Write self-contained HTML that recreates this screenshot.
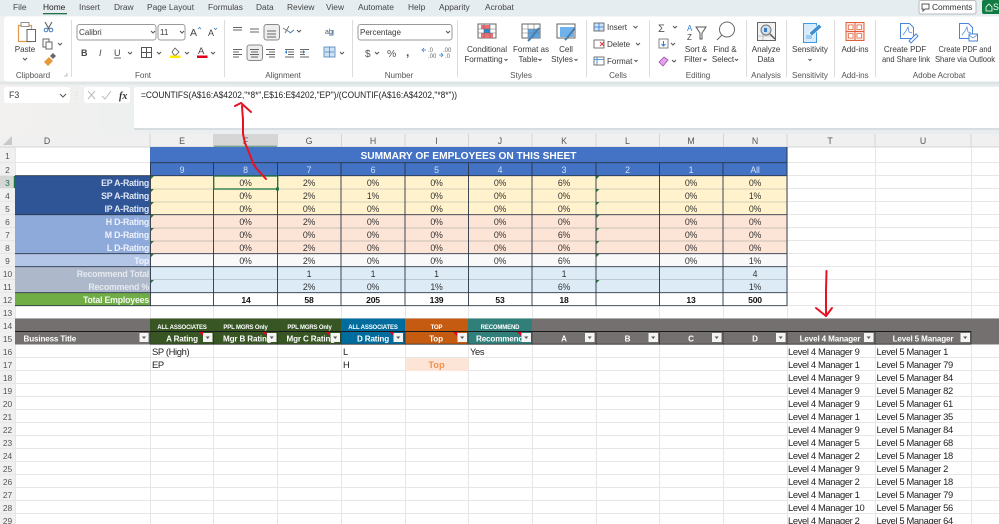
<!DOCTYPE html>
<html><head><meta charset="utf-8"><title>Sheet</title>
<style>
html,body{margin:0;padding:0;background:#fff;width:999px;height:524px;overflow:hidden}
svg{display:block;font-family:"Liberation Sans",sans-serif}
.t{font-size:8.1px;fill:#3a3a3a;letter-spacing:-.05px}
.m{text-anchor:middle}
.tab{font-size:8.4px;fill:#444}
.c{font-size:8.8px;fill:#333;text-anchor:middle;letter-spacing:-.2px}
.b{font-weight:bold;fill:#111;font-size:8.6px}
.h{font-size:8.8px;fill:#555;text-anchor:middle}
.r{font-weight:bold;font-size:8.8px;text-anchor:end;letter-spacing:-.22px}
.w{font-weight:bold;fill:#fff;font-size:8.1px;letter-spacing:-.15px}
.wm{text-anchor:middle}
.s{font-weight:bold;fill:#fff;font-size:6px;text-anchor:middle;letter-spacing:-.15px}
.d{font-size:9.4px;fill:#222;letter-spacing:-.36px}
.i{fill:none;stroke:#555;stroke-width:1}
.n{fill:#fff;stroke:#888;stroke-width:.7}
</style></head><body>
<svg width="999" height="524" viewBox="0 0 999 524" xmlns="http://www.w3.org/2000/svg">
<defs><linearGradient id="bg" x1="0" x2="1" y1="0" y2="0"><stop offset="0" stop-color="#f3f1ef"/><stop offset=".25" stop-color="#e8eef0"/></linearGradient></defs>
<rect width="999" height="134" fill="url(#bg)"/>
<rect width="999" height="16" fill="#e6edf0"/>
<!-- tabs -->
<g class="tab">
<text x="13" y="10">File</text><text x="43" y="10" style="fill:#222">Home</text><text x="79" y="10">Insert</text><text x="114" y="10">Draw</text><text x="147" y="10">Page Layout</text><text x="208" y="10">Formulas</text><text x="256" y="10">Data</text><text x="287" y="10">Review</text><text x="326" y="10">View</text><text x="358" y="10">Automate</text><text x="408" y="10">Help</text><text x="439" y="10">Apparity</text><text x="485" y="10">Acrobat</text>
</g>
<rect x="43" y="13" width="24" height="1.3" fill="#217346"/>
<rect x="919" y=".5" width="57" height="13.5" rx="2" fill="#fff" stroke="#bbb"/>
<path d="M922 4h7v5h-4l-2 2v-2h-1z" class="i" stroke-width=".8"/>
<text x="932" y="10" class="tab" style="fill:#333">Comments</text>
<rect x="982" y="0" width="20" height="14" rx="2" fill="#107c41"/>
<path d="M986 7l3-3 3 3v4h-6z" fill="none" stroke="#fff" stroke-width=".8"/>
<text x="993" y="10" font-size="8.8" fill="#fff">S</text>
<!-- ribbon card -->
<rect x="4" y="16.5" width="1000" height="65" rx="3" fill="#fff"/>
<rect x="0" y="81.5" width="999" height="3" fill="#d9dfe1" opacity=".7"/>
<g stroke="#dcdcdc" stroke-width="1"><path d="M71.500 20V77M224.500 20V77M352.500 20V77M457.500 20V77M586.500 20V77M649.500 20V77M746.500 20V77M786.500 20V77M834.500 20V77M875.500 20V77"/></g>
<!-- group labels -->
<g class="t m" style="fill:#555">
<text x="33" y="78">Clipboard</text><text x="143" y="78">Font</text><text x="283" y="78">Alignment</text><text x="399" y="78">Number</text><text x="521" y="78">Styles</text><text x="618" y="78">Cells</text><text x="698" y="78">Editing</text><text x="766" y="78">Analysis</text><text x="810" y="78">Sensitivity</text><text x="855" y="78">Add-ins</text><text x="939" y="78">Adobe Acrobat</text>
</g>
<!-- clipboard -->
<path d="M18.500 25.500h13v16h-13z" fill="#fff" stroke="#e39a4c" stroke-width="1.200"/>
<rect x="21" y="22.500" width="8" height="4" fill="#fff" stroke="#777" stroke-width=".8"/>
<rect x="27" y="29.500" width="8.500" height="12" fill="#fff" stroke="#666" stroke-width="1"/>
<text x="25" y="52" class="t m">Paste</text>
<path d="M23 58l2 2 2-2" class="i" stroke-width=".8"/>
<path d="M45 22l4 7M52 22l-4 7" stroke="#555" fill="none"/><circle cx="46" cy="30" r="1.800" fill="none" stroke="#3b7bbf"/><circle cx="51" cy="30" r="1.800" fill="none" stroke="#3b7bbf"/>
<rect x="43" y="39" width="6" height="8" fill="#fff" stroke="#666"/><rect x="46" y="42" width="6" height="7" fill="#fff" stroke="#666"/><path d="M58 43l2 2 2-2" class="i" stroke-width=".8"/>
<path d="M44 62l5-5 4 4-5 5z" fill="#e8973c"/><path d="M50 56l3-3 3 3-3 3z" fill="#666"/>
<path d="M64 76h3v-3" stroke="#aaa" fill="none" stroke-width=".8"/>
<!-- font -->
<rect x="77" y="24.500" width="79" height="15.500" rx="2.500" fill="#fff" stroke="#999"/>
<text x="79" y="35" class="t">Calibri</text><path d="M151 31l2 2 2-2" class="i" stroke-width=".8"/>
<rect x="158" y="24.500" width="27" height="15.500" rx="2.500" fill="#fff" stroke="#999"/>
<text x="160" y="35" class="t">11</text><path d="M180 31l2 2 2-2" class="i" stroke-width=".8"/>
<text x="190" y="36" font-size="10.500" fill="#444">A</text><path d="M198 29l1.500-1.500 1.500 1.500" stroke="#3b7bbf" fill="none" stroke-width=".8"/>
<text x="208" y="36" font-size="9" fill="#444">A</text><path d="M214 28l1.500 1.500 1.500-1.500" stroke="#3b7bbf" fill="none" stroke-width=".8"/>
<text x="81" y="56" font-size="9" font-weight="bold" fill="#444">B</text>
<text x="99" y="56" font-size="9" font-style="italic" fill="#444">I</text>
<text x="114" y="56" font-size="9" fill="#444">U</text><path d="M114 58h7" stroke="#444" stroke-width=".8"/><path d="M128 52l2 2 2-2" class="i" stroke-width=".8"/>
<path d="M141.500 47.500h10v10h-10zM146.500 47.500v10M141.500 52.500h10" class="i" stroke-width=".8"/><path d="M157 52l2 2 2-2" class="i" stroke-width=".8"/>
<path d="M172 52l3-4 4 4-3 3h-2z" fill="none" stroke="#555" stroke-width=".8"/><rect x="170" y="55.500" width="10.500" height="2.500" fill="#ffeb00"/><path d="M185 52l2 2 2-2" class="i" stroke-width=".8"/>
<text x="198" y="54" font-size="9.500" fill="#444">A</text><rect x="197" y="55.500" width="10.500" height="2.500" fill="#e3001b"/><path d="M211 52l2 2 2-2" class="i" stroke-width=".8"/>
<!-- alignment -->
<rect x="264" y="24.500" width="15.500" height="15.500" rx="2.500" fill="#eee" stroke="#888"/>
<rect x="247" y="45" width="15.500" height="15.500" rx="2.500" fill="#eee" stroke="#888"/>
<g stroke="#666" stroke-width=".9" fill="none">
<path d="M233 27.500h9M233 30h9M233 32.500h0M250 29h9M250 32h9M267 31h9M267 34h9M267 37h9"/>
<path d="M233 49.500h9M233 52h6M233 54.500h9M233 57h6M250 49.500h9M251 52h7M250 54.500h9M251 57h7M266 49.500h9M269 52h6M266 54.500h9M269 57h6"/>
<path d="M285 49.500h9M288 52h6M288 54.500h6M285 57h9M300 49.500h9M300 52h5M300 54.500h5M300 57h9"/>
</g>
<path d="M283 28l8 5M285 33l4-7" stroke="#777" fill="none"/><path d="M290 33l4-3" stroke="#3b7bbf" fill="none"/><path d="M297 30l2 2 2-2" class="i" stroke-width=".8"/>
<path d="M285 52l2-2v4zM305 52l-2-2v4z" fill="#2b7cd3"/>
<text x="325" y="34" font-size="7" fill="#555">ab</text><path d="M333 30v5h-4" stroke="#3b7bbf" fill="none"/>
<rect x="324" y="47" width="11" height="10" fill="#cfe3f6" stroke="#4a7fb5" stroke-width=".8"/><path d="M325 52h9M329.500 47v10" stroke="#4a7fb5" stroke-width=".7"/><path d="M340 52l2 2 2-2" class="i" stroke-width=".8"/>
<!-- number -->
<rect x="358" y="24.500" width="94" height="15.500" rx="2.500" fill="#fff" stroke="#999"/>
<text x="360" y="35" class="t">Percentage</text><path d="M446 31l2 2 2-2" class="i" stroke-width=".8"/>
<text x="365" y="57" font-size="10" fill="#555">$</text><path d="M375 52l2 2 2-2" class="i" stroke-width=".8"/>
<text x="387" y="57" font-size="10.500" fill="#555">%</text>
<text x="406" y="56" font-size="12" font-weight="bold" fill="#555">,</text>
<text x="428" y="52" font-size="6" fill="#666">.0</text><text x="428" y="58" font-size="6" fill="#666">.00</text><path d="M423 50h3M424 48l-2 2 2 2" stroke="#3b7bbf" fill="none" stroke-width=".8"/>
<text x="443" y="52" font-size="6" fill="#666">.00</text><text x="445" y="58" font-size="6" fill="#666">.0</text><path d="M439 55h3M441 53l2 2-2 2" stroke="#3b7bbf" fill="none" stroke-width=".8"/>
<!-- styles -->
<rect x="478" y="24" width="18" height="14" fill="#fff" stroke="#666"/><rect x="481" y="25" width="9" height="4" fill="#ef6e76"/><rect x="484" y="29" width="6" height="4" fill="#2b8ad6"/><rect x="481" y="33" width="12" height="5" fill="#ef6e76"/>
<path d="M478 29h18M478 33h18M484 24v14M490 24v14" stroke="#666" stroke-width=".6"/>
<rect x="522" y="24" width="18" height="14" fill="#fff" stroke="#666"/><rect x="528" y="29" width="12" height="9" fill="#5aa4e6"/><path d="M522 29h18M522 33h18M528 24v14M534 24v14" stroke="#777" stroke-width=".6"/><path d="M539 28l-9 11-2 2" stroke="#4b7ea8" stroke-width="2" fill="none"/>
<rect x="557" y="24" width="18" height="14" fill="#fff" stroke="#666"/><rect x="560" y="27" width="14" height="10" fill="#6fb1ea"/><path d="M575 28l-8 10-2 2" stroke="#4b7ea8" stroke-width="2" fill="none"/>
<g class="t m">
<text x="487" y="52">Conditional</text><text x="483.500" y="62">Formatting</text>
<text x="531" y="52">Format as</text><text x="528" y="62">Table</text>
<text x="566" y="52">Cell</text><text x="562" y="62">Styles</text>
</g>
<path d="M504.500 59l1.500 1.500 1.500-1.500M538.500 59l1.500 1.500 1.500-1.500M574.500 59l1.500 1.500 1.500-1.500M703.500 59l1.500 1.500 1.500-1.500M735 59l1.500 1.500 1.500-1.500M634.500 60l1.500 1.500 1.500-1.500M808.500 59l1.500 1.500 1.500-1.500" class="i" stroke-width=".8"/>
<!-- cells -->
<rect x="594" y="23" width="10" height="8" fill="#cfe3f6" stroke="#555" stroke-width=".8"/><path d="M594 27h10M599 23v8" stroke="#2b7cd3" stroke-width=".8"/>
<rect x="594" y="40" width="10" height="8" fill="#fff" stroke="#555" stroke-width=".8"/><path d="M600 42l4 4M604 42l-4 4" stroke="#d33" stroke-width=".9"/>
<rect x="594" y="57" width="10" height="8" fill="#fff" stroke="#555" stroke-width=".8"/><path d="M594 59.500h10M597 57v8" stroke="#2b7cd3" stroke-width=".8"/>
<g class="t"><text x="607" y="30">Insert</text><text x="607" y="47">Delete</text><text x="607" y="64">Format</text></g>
<path d="M633.500 26l2 2 2-2M636 43l2 2 2-2" class="i" stroke-width=".8"/>
<!-- editing -->
<text x="658" y="32" font-size="11" fill="#555">Σ</text><path d="M673 26l2 2 2-2" class="i" stroke-width=".8"/>
<rect x="659" y="39" width="9" height="9" fill="#fff" stroke="#666" stroke-width=".8"/><path d="M663.500 41v5M661.500 44l2 2 2-2" stroke="#2b7cd3" fill="none"/><path d="M671 43l2 2 2-2" class="i" stroke-width=".8"/>
<path d="M659 62l5-5 4 3-5 6z" fill="#e5a3ee" stroke="#a04ab0" stroke-width=".8"/><path d="M672 60l2 2 2-2" class="i" stroke-width=".8"/>
<text x="687" y="31" font-size="8" fill="#2b7cd3">A</text><text x="687" y="40" font-size="8" fill="#444">Z</text><path d="M696 27h10l-4 6v6h-2v-6z" class="i" stroke-width=".9"/>
<circle cx="727" cy="29.500" r="7.500" fill="#fff" stroke="#666"/><path d="M722 35l-5 5" stroke="#666"/>
<g class="t m"><text x="696" y="52">Sort &amp;</text><text x="693" y="62">Filter</text><text x="725" y="52">Find &amp;</text><text x="723" y="62">Select</text>
<text x="766" y="52">Analyze</text><text x="766" y="62">Data</text><text x="810" y="52">Sensitivity</text><text x="855" y="52">Add-ins</text>
<text x="905" y="52">Create PDF</text><text x="906" y="62" textLength="48" lengthAdjust="spacingAndGlyphs">and Share link</text><text x="965" y="52" textLength="53" lengthAdjust="spacingAndGlyphs">Create PDF and</text><text x="965" y="62" textLength="60" lengthAdjust="spacingAndGlyphs">Share via Outlook</text></g>
<!-- analyze -->
<rect x="757.500" y="22.500" width="18" height="18" fill="#f2f2f2" stroke="#666"/><circle cx="766" cy="30" r="5" fill="#cfe0ef" stroke="#777"/><rect x="764" y="28" width="3" height="4" fill="#3b7bbf"/><path d="M770 34l5 5" stroke="#555" stroke-width="1.400"/><path d="M758 36h13M763 34v6" stroke="#999" stroke-width=".6"/>
<!-- sensitivity -->
<path d="M803.500 23.500h13v19h-13z" fill="#d7ebfb" stroke="#3f9be0"/><path d="M809 33l10-9 3 3-10 9z" fill="#3f8ed0" stroke="#fff" stroke-width=".7"/><path d="M806 36h6M806 38h6" stroke="#3f9be0" stroke-width=".7"/>
<!-- add-ins -->
<rect x="846" y="22.500" width="18" height="18" fill="#fbe3da" stroke="#e0603c"/><path d="M855 22.500v18M846 31.500h18" stroke="#e0603c" stroke-width="1"/><rect x="848.500" y="25" width="4.500" height="4.500" fill="#fff" stroke="#e0603c" stroke-width=".7"/><rect x="857" y="25" width="4.500" height="4.500" fill="#fff" stroke="#e0603c" stroke-width=".7"/><rect x="848.500" y="33.500" width="4.500" height="4.500" fill="#fff" stroke="#e0603c" stroke-width=".7"/><rect x="857" y="33.500" width="4.500" height="4.500" fill="#fff" stroke="#e0603c" stroke-width=".7"/>
<!-- pdf -->
<path d="M900.500 23.500h9l4 4v11h-13z" fill="#fff" stroke="#4a86d8"/><path d="M903 35l3-4 2-4 1 5 3 1" fill="none" stroke="#4a86d8" stroke-width=".7"/><path d="M909 41l7-7 2 2-7 7z" fill="#fff" stroke="#4a86d8"/>
<path d="M959.500 23.500h9l4 4v11h-13z" fill="#fff" stroke="#4a86d8"/><path d="M962 35l3-4 2-4 1 5 3 1" fill="none" stroke="#4a86d8" stroke-width=".7"/><rect x="969" y="34" width="8.500" height="7" fill="#fff" stroke="#4a86d8"/><path d="M969 35l4 3 4-3" fill="none" stroke="#4a86d8" stroke-width=".7"/>
<!-- formula bar -->
<rect x="4" y="87" width="66" height="16" rx="2.500" fill="#fff"/>
<text x="9" y="98" class="t" style="font-size:8.800px">F3</text><path d="M60 94l3 3 3-3" class="i" stroke-width=".9"/>
<path d="M76.500 92v.1M76.500 95v.1M76.500 98v.1" stroke="#555" stroke-width="1.200"/>
<rect x="84" y="87" width="46" height="16" rx="2.500" fill="#fff"/>
<path d="M88 91l7 8M95 91l-7 8M102 96l3 3 6-8" fill="none" stroke="#bbb"/>
<text x="119" y="99" font-size="10" font-style="italic" font-family="Liberation Serif" fill="#333" font-weight="bold">fx</text>
<rect x="134" y="87" width="870" height="41.500" rx="2.500" fill="#fff"/>
<rect x="134" y="128" width="865" height="2" fill="#d8dde0"/>
<text x="141" y="98" font-size="8.800" fill="#222" textLength="316" lengthAdjust="spacingAndGlyphs">=COUNTIFS(A$16:A$4202,"*8*",E$16:E$4202,"EP")/(COUNTIF(A$16:A$4202,"*8*"))</text>

<!-- SHEET -->
<rect x="0" y="134" width="999" height="390" fill="#fff"/>
<rect x="0" y="134" width="999" height="13" fill="#f0f0f0"/>
<rect x="0" y="147" width="15" height="377" fill="#f0f0f0"/>
<path d="M12 136v9h-9z" fill="#c8c8c8"/>
<rect x="213.500" y="134" width="64" height="13" fill="#d6d6d6"/><rect x="213.500" y="145.800" width="64" height="1.400" fill="#217346"/>
<rect x="0" y="175.700" width="15" height="13" fill="#d6d6d6"/><rect x="13.800" y="175.700" width="1.400" height="13" fill="#217346"/>
<g stroke="#d4d4d4" stroke-width="1"><path d="M150 134V147M213.500 134V147M277.500 134V147M341.500 134V147M405 134V147M468.500 134V147M532 134V147M596 134V147M659.500 134V147M723.500 134V147M787 134V147M875 134V147M971 134V147M0 147H999"/></g>
<!-- grid -->
<g stroke="#e6e6e6" stroke-width="1">
<path d="M0 162.500H999M0 175.500H999M0 188.500H999M0 201.500H999M0 214.500H999M0 227.500H999M0 240.500H999M0 253.500H999M0 266.500H999M0 279.500H999M0 292.500H999M0 305.500H999M0 318.500H999M0 357.500H999M0 370.500H999M0 383.500H999M0 396.500H999M0 409.500H999M0 422.500H999M0 435.500H999M0 448.500H999M0 461.500H999M0 474.500H999M0 487.500H999M0 500.500H999M0 513.500H999"/>
<path d="M150.500 147V524M213.500 305V524M277.500 305V524M341.500 305V524M405.500 305V524M468.500 305V524M532.500 305V524M596.500 305V524M659.500 305V524M723.500 305V524M787.500 147V524M875.500 147V524M971.500 147V524M15.500 147V524"/>
</g>
<!-- summary fills -->
<rect x="150" y="147" width="637" height="15.700" fill="#4472c4"/>
<rect x="150" y="162.700" width="637" height="13" fill="#4472c4"/>
<rect x="150" y="175.700" width="637" height="39" fill="#fff2cc"/>
<rect x="150" y="214.700" width="637" height="39" fill="#fce4d6"/>
<rect x="150" y="253.700" width="637" height="13" fill="#f9f9f9"/>
<rect x="150" y="266.700" width="637" height="26" fill="#ddebf7"/>
<rect x="150" y="292.700" width="637" height="13" fill="#fff"/>
<rect x="15" y="175.700" width="135" height="39" fill="#2f5597"/>
<rect x="15" y="214.700" width="135" height="39" fill="#8eaadb"/>
<rect x="15" y="253.700" width="135" height="13" fill="#b4c6e7"/>
<rect x="15" y="266.700" width="135" height="26" fill="#adb9ca"/>
<rect x="15" y="292.700" width="135" height="13" fill="#70ad47"/>
<!-- thin inner rows -->
<g stroke="#c7c2b0" stroke-width=".7"><path d="M150 189H787M150 202H787"/></g>
<g stroke="#bdb3ac" stroke-width=".7"><path d="M150 228H787M150 241H787"/></g>
<path d="M150 279.700H787" stroke="#a9b4bd" stroke-width=".7"/>
<!-- dark lines -->
<g stroke="#2a3646" stroke-width=".9"><path d="M15 175.700H787M15 214.700H787M15 253.700H787M15 266.700H787M15 292.700H787M15 305.700H787"/>
<path d="M150.500 162.700V305.700M213.500 162.700V305.700M277.500 162.700V305.700M341 162.700V305.700M405 162.700V305.700M468.500 162.700V305.700M532 162.700V305.700M596 162.700V305.700M659.500 162.700V305.700M723 162.700V305.700M787 147V305.700M150 162.700H787"/></g>
<!-- green triangles -->
<g fill="#1e7b34">
<path d="M151 176v3l3-3zM151 189v3l3-3zM151 202v3l3-3zM151 215v3l3-3zM151 228v3l3-3zM151 241v3l3-3zM151 254v3l3-3zM151 280v3l3-3z"/>
<path d="M596.500 176v3l3-3zM596.500 189v3l3-3zM596.500 202v3l3-3zM596.500 215v3l3-3zM596.500 228v3l3-3zM596.500 241v3l3-3zM596.500 254v3l3-3zM596.500 280v3l3-3z"/>
</g>
<!-- selection -->
<rect x="213.700" y="176" width="64" height="13" fill="none" stroke="#217346" stroke-width="1.300"/>
<rect x="276" y="187.500" width="3" height="3" fill="#217346"/>
<!-- title -->
<text x="360.500" y="159" font-size="10.200" font-weight="bold" fill="#fff" textLength="216" lengthAdjust="spacingAndGlyphs">SUMMARY OF EMPLOYEES ON THIS SHEET</text>
<g class="c" style="fill:#cfe0f7"><text x="182" y="173">9</text><text x="245.500" y="173">8</text><text x="309" y="173">7</text><text x="373" y="173">6</text><text x="436.500" y="173">5</text><text x="500" y="173">4</text><text x="564" y="173">3</text><text x="627.500" y="173">2</text><text x="691" y="173">1</text><text x="755" y="173">All</text></g>
<!-- labels -->
<g class="r">
<text x="149" y="186" fill="#dfe7f5">EP A-Rating</text><text x="149" y="199" fill="#dfe7f5">SP A-Rating</text><text x="149" y="212" fill="#dfe7f5">IP A-Rating</text>
<text x="149" y="225" fill="#eef2fa">H D-Rating</text><text x="149" y="238" fill="#eef2fa">M D-Rating</text><text x="149" y="251" fill="#eef2fa">L D-Rating</text>
<text x="149" y="264" fill="#eef2fa">Top</text><text x="149" y="277" fill="#e6e9ef">Recommend Total</text><text x="149" y="290" fill="#e6e9ef">Recommend %</text><text x="149" y="303" fill="#f2f7ee">Total Employees</text>
</g>
<!-- values -->
<g class="c">
<text x="245.500" y="186">0%</text><text x="245.500" y="199">0%</text><text x="245.500" y="212">0%</text><text x="245.500" y="225">0%</text><text x="245.500" y="238">0%</text><text x="245.500" y="251">0%</text><text x="245.500" y="264">0%</text>
<text x="309" y="186">2%</text><text x="309" y="199">2%</text><text x="309" y="212">0%</text><text x="309" y="225">2%</text><text x="309" y="238">0%</text><text x="309" y="251">2%</text><text x="309" y="264">2%</text><text x="309" y="277">1</text><text x="309" y="290">2%</text>
<text x="373" y="186">0%</text><text x="373" y="199">1%</text><text x="373" y="212">0%</text><text x="373" y="225">0%</text><text x="373" y="238">0%</text><text x="373" y="251">0%</text><text x="373" y="264">0%</text><text x="373" y="277">1</text><text x="373" y="290">0%</text>
<text x="436.500" y="186">0%</text><text x="436.500" y="199">0%</text><text x="436.500" y="212">0%</text><text x="436.500" y="225">0%</text><text x="436.500" y="238">0%</text><text x="436.500" y="251">0%</text><text x="436.500" y="264">0%</text><text x="436.500" y="277">1</text><text x="436.500" y="290">1%</text>
<text x="500" y="186">0%</text><text x="500" y="199">0%</text><text x="500" y="212">0%</text><text x="500" y="225">0%</text><text x="500" y="238">0%</text><text x="500" y="251">0%</text><text x="500" y="264">0%</text>
<text x="564" y="186">6%</text><text x="564" y="199">0%</text><text x="564" y="212">0%</text><text x="564" y="225">0%</text><text x="564" y="238">6%</text><text x="564" y="251">0%</text><text x="564" y="264">6%</text><text x="564" y="277">1</text><text x="564" y="290">6%</text>
<text x="691" y="186">0%</text><text x="691" y="199">0%</text><text x="691" y="212">0%</text><text x="691" y="225">0%</text><text x="691" y="238">0%</text><text x="691" y="251">0%</text><text x="691" y="264">0%</text>
<text x="755" y="186">0%</text><text x="755" y="199">1%</text><text x="755" y="212">0%</text><text x="755" y="225">0%</text><text x="755" y="238">0%</text><text x="755" y="251">0%</text><text x="755" y="264">1%</text><text x="755" y="277">4</text><text x="755" y="290">1%</text>
<g class="b"><text x="246" y="303">14</text><text x="309" y="303">58</text><text x="373" y="303">205</text><text x="436.500" y="303">139</text><text x="500" y="303">53</text><text x="564" y="303">18</text><text x="691" y="303">13</text><text x="755" y="303">500</text></g>
</g>
<!-- table header rows -->
<rect x="15" y="318.500" width="984" height="26" fill="#757070"/>
<rect x="150" y="318.500" width="191" height="26" fill="#375623"/>
<rect x="341" y="318.500" width="64" height="26" fill="#006c9e"/>
<rect x="405" y="318.500" width="63" height="26" fill="#c55a11"/>
<rect x="468" y="318.500" width="64" height="26" fill="#317f7a"/>
<path d="M15 331.500H971" stroke="#1a1a1a" stroke-width="1"/>
<path d="M150 344.200H971" stroke="#333" stroke-width=".8"/>
<g stroke="#2a2a2a" stroke-width=".7"><path d="M150 331V344M213.500 331V344M277.500 331V344M341 331V344M405 331V344M468 331V344M532 331V344M596 331V344M659.500 331V344M723 331V344M787 331V344M875 331V344M971 331V344"/></g>
<g class="s"><text x="182" y="329">ALL ASSOCIATES</text><text x="245.500" y="329">PPL MGRS Only</text><text x="309.500" y="329">PPL MGRS Only</text><text x="373" y="329">ALL ASSOCIATES</text><text x="436.500" y="329">TOP</text><text x="500" y="329">RECOMMEND</text></g>
<g class="w">
<text x="23.500" y="341.500">Business Title</text>
<text x="182" y="341.500" class="wm">A Rating</text><text x="223" y="341.500">Mgr B Rating</text><text x="286.500" y="341.500">Mgr C Rating</text><text x="373" y="341.500" class="wm">D Rating</text><text x="436" y="341.500" class="wm">Top</text><text x="476" y="341.500">Recommend</text><text x="564" y="341.500" class="wm">A</text><text x="627.500" y="341.500" class="wm">B</text><text x="691" y="341.500" class="wm">C</text><text x="755" y="341.500" class="wm">D</text><text x="830" y="341.500" class="wm">Level 4 Manager</text><text x="923" y="341.500" class="wm">Level 5 Manager</text></g>
<!-- filter buttons -->
<g fill="#f4f4f4"><rect x="139.500" y="333" width="9" height="9"/><rect x="203" y="333" width="9.500" height="9"/><rect x="267" y="333" width="9.500" height="9"/><rect x="330.500" y="333" width="9.500" height="9"/><rect x="393.500" y="333" width="9.500" height="9"/><rect x="457.500" y="333" width="9.500" height="9"/><rect x="521.500" y="333" width="9.500" height="9"/><rect x="585" y="333" width="9.500" height="9"/><rect x="648.500" y="333" width="9.500" height="9"/><rect x="712" y="333" width="9.500" height="9"/><rect x="776" y="333" width="9.500" height="9"/><rect x="864" y="333" width="9.500" height="9"/><rect x="960.500" y="333" width="9.500" height="9"/></g>
<g fill="#555"><path d="M142 336.500h4l-2 2.500zM205.700 336.500h4l-2 2.500zM269.700 336.500h4l-2 2.500zM333.200 336.500h4l-2 2.500zM396.200 336.500h4l-2 2.500zM460.200 336.500h4l-2 2.500zM524.200 336.500h4l-2 2.500zM587.700 336.500h4l-2 2.500zM651.200 336.500h4l-2 2.500zM714.700 336.500h4l-2 2.500zM778.700 336.500h4l-2 2.500zM866.700 336.500h4l-2 2.500zM963.200 336.500h4l-2 2.500z"/></g>
<g fill="#e6001f"><path d="M199 332h4v4zM262.500 332h4v4zM326 332h4v4zM389.500 332h4v4zM453 332h4v4zM517 332h4v4z"/></g>
<!-- data -->
<rect x="405.500" y="358" width="63" height="13" fill="#fce4d6"/>
<text x="436.500" y="368" class="b" text-anchor="middle" style="fill:#f4904a;font-size:9.300px">Top</text>
<g class="d">
<text x="152" y="355">SP (High)</text><text x="152" y="368">EP</text><text x="343" y="355">L</text><text x="343" y="368">H</text><text x="470" y="355">Yes</text>
<text x="788" y="355">Level 4 Manager 9</text><text x="788" y="368">Level 4 Manager 1</text><text x="788" y="381">Level 4 Manager 9</text><text x="788" y="394">Level 4 Manager 9</text><text x="788" y="407">Level 4 Manager 9</text><text x="788" y="420">Level 4 Manager 1</text><text x="788" y="433">Level 4 Manager 9</text><text x="788" y="446">Level 4 Manager 5</text><text x="788" y="459">Level 4 Manager 2</text><text x="788" y="472">Level 4 Manager 9</text><text x="788" y="485">Level 4 Manager 2</text><text x="788" y="498">Level 4 Manager 1</text><text x="788" y="511">Level 4 Manager 10</text><text x="788" y="524">Level 4 Manager 2</text>
<text x="876.500" y="355">Level 5 Manager 1</text><text x="876.500" y="368">Level 5 Manager 79</text><text x="876.500" y="381">Level 5 Manager 84</text><text x="876.500" y="394">Level 5 Manager 82</text><text x="876.500" y="407">Level 5 Manager 61</text><text x="876.500" y="420">Level 5 Manager 35</text><text x="876.500" y="433">Level 5 Manager 84</text><text x="876.500" y="446">Level 5 Manager 68</text><text x="876.500" y="459">Level 5 Manager 18</text><text x="876.500" y="472">Level 5 Manager 2</text><text x="876.500" y="485">Level 5 Manager 18</text><text x="876.500" y="498">Level 5 Manager 79</text><text x="876.500" y="511">Level 5 Manager 56</text><text x="876.500" y="524">Level 5 Manager 64</text>
</g>
<!-- column headers -->
<g class="h"><text x="47" y="144">D</text><text x="182" y="144">E</text><text x="245.500" y="144">F</text><text x="309" y="144">G</text><text x="373" y="144">H</text><text x="436.500" y="144">I</text><text x="500" y="144">J</text><text x="564" y="144">K</text><text x="627.500" y="144">L</text><text x="691" y="144">M</text><text x="755" y="144">N</text><text x="830" y="144">T</text><text x="923" y="144">U</text></g>
<!-- row numbers -->
<g class="h" style="font-size:8.400px"><text x="7.500" y="159">1</text><text x="7.500" y="173">2</text><text x="7.500" y="186" style="fill:#217346">3</text><text x="7.500" y="199">4</text><text x="7.500" y="212">5</text><text x="7.500" y="225">6</text><text x="7.500" y="238">7</text><text x="7.500" y="251">8</text><text x="7.500" y="264">9</text><text x="7.500" y="277">10</text><text x="7.500" y="290">11</text><text x="7.500" y="303">12</text><text x="7.500" y="316">13</text><text x="7.500" y="329">14</text><text x="7.500" y="342">15</text><text x="7.500" y="355">16</text><text x="7.500" y="368">17</text><text x="7.500" y="381">18</text><text x="7.500" y="394">19</text><text x="7.500" y="407">20</text><text x="7.500" y="420">21</text><text x="7.500" y="433">22</text><text x="7.500" y="446">23</text><text x="7.500" y="459">24</text><text x="7.500" y="472">25</text><text x="7.500" y="485">26</text><text x="7.500" y="498">27</text><text x="7.500" y="511">28</text><text x="7.500" y="524">29</text></g>
<!-- red arrows -->
<g fill="none" stroke="#e81123" stroke-width="2" stroke-linecap="round" stroke-linejoin="round">
<path d="M266 179L256 168 253 163 248 150 245 143 243 134 243 120 242 106"/>
<path d="M235 106L241 103 251 112"/>
<path d="M826.500 271L826 290 826 316"/>
<path d="M816 308L826 316 832 308"/>
</g>
</svg>
</body></html>
